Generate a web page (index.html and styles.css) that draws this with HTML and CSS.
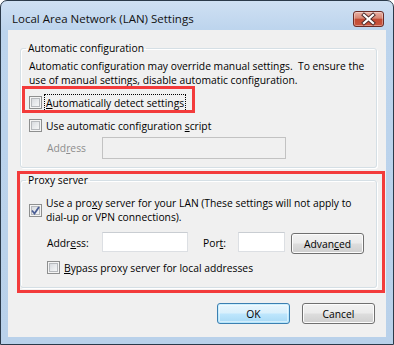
FILE: index.html
```html
<!DOCTYPE html>
<html>
<head>
<meta charset="utf-8">
<link rel="stylesheet" href="styles.css">
</head>
<body>
<div class="window">
  <div class="titlebar">
    <span class="title">Local Area Network (LAN) Settings</span>
    <span class="close">
      <svg width="29" height="14" viewBox="0 0 29 14">
        <path d="M10 3 L19 11 M19 3 L10 11" stroke="#4a2a2a" stroke-width="4" stroke-linecap="square" fill="none"/>
        <path d="M10 3 L19 11 M19 3 L10 11" stroke="#fff" stroke-width="2.2" stroke-linecap="square" fill="none"/>
      </svg>
    </span>
  </div>
  <div class="client">
    <fieldset class="group g1">
      <legend>Automatic configuration</legend>
      <p class="desc">Automatic configuration may override manual settings.&nbsp; To ensure the<br>use of manual settings, disable automatic configuration.</p>
      <div class="check row1"><span class="cb"></span><span class="lbl focus"><u>A</u>utomatically detect settings</span></div>
      <div class="check row2"><span class="cb"></span><span class="lbl">Use automatic configuration <u>s</u>cript</span></div>
      <div class="addr"><span class="alabel disabled">Add<u>r</u>ess</span><span class="input dis"></span></div>
    </fieldset>
    <fieldset class="group g2">
      <legend>Proxy server</legend>
      <div class="check multi"><span class="cb checked"><svg width="9" height="9" viewBox="0 0 9 9"><path d="M1 4.5 L3.5 7.5 L8 1" stroke="#4b5e95" stroke-width="1.8" fill="none"/></svg></span><span class="lbl">Use a pro<u>x</u>y server for your LAN (These settings will not apply to<br>dial-up or VPN connections).</span></div>
      <div class="proxyrow">
        <span class="plabel">Addr<u>e</u>ss:</span><span class="input paddr"></span>
        <span class="plabel port">Por<u>t</u>:</span><span class="input pport"></span>
        <span class="btn adv">Advan<u>c</u>ed</span>
      </div>
      <div class="check bypass"><span class="cb"></span><span class="lbl"><u>B</u>ypass proxy server for local addresses</span></div>
    </fieldset>
    <div class="buttons">
      <span class="btn default">OK</span>
      <span class="btn">Cancel</span>
    </div>
  </div>
  <div class="mark m1"></div>
  <div class="mark m2"></div>
</div>
</body>
</html>
```
FILE: styles.css
```css
* { box-sizing: border-box; }
html, body { margin: 0; padding: 0; background: #fff; }
body { font-family: "Open Sans", "Noto Sans", sans-serif; font-size: 10.3px; color: #000; white-space: nowrap; }

.window {
  position: relative;
  width: 394px;
  height: 345px;
  border: 1px solid #2b3a4a;
  border-radius: 7px 7px 0 0;
  background: linear-gradient(180deg, #cfe0f3 0, #bcd4ed 30px, #b9d1ea 100%);
  padding: 0 7px 7px 7px;
  display: flex;
  flex-direction: column;
}

.titlebar {
  height: 29px;
  display: flex;
  align-items: flex-start;
  justify-content: space-between;
  padding: 10px 2px 0 4px;
}
.title { line-height: 16px; font-size: 11.5px; color: #111; }
.close {
  width: 31px;
  height: 16px;
  border: 1px solid #6b2b25;
  border-radius: 3px;
  background: linear-gradient(180deg, #e9b1a5 0, #d78572 45%, #c34a33 50%, #c9553d 100%);
  box-shadow: inset 0 0 0 1px rgba(255,255,255,0.35);
  display: flex;
  align-items: center;
  justify-content: center;
}

.client {
  flex: 1;
  background: #f0f0f0;
  display: flex;
  flex-direction: column;
}

.group {
  margin: 0 9px 0 12px;
  border: 1px solid #d5dfe5;
  border-radius: 3px;
  box-shadow: inset 1px 1px 0 #fff, 1px 1px 0 #fff;
  min-width: 0;
  padding-left: 8px;
  padding-right: 8px;
}
.group legend {
  line-height: 14px;
  padding: 0 2px;
  margin-left: -3px;
}
.g1 { margin-top: 11px; padding-top: 4px; padding-bottom: 8px; }
.g2 { margin-top: 5px; padding-top: 9px; padding-bottom: 11px; }

.desc { margin: 0; line-height: 14px; }

.check { display: flex; align-items: center; line-height: 14px; }
.check .cb { margin-right: 3px; flex: none; }
.row1 { height: 17px; margin-top: 7px; }
.row2 { height: 17px; margin-top: 6px; }
.lbl { padding: 1px 1px; }
.focus { outline: 1px dotted #000; outline-offset: 0; }

.cb {
  width: 13px;
  height: 13px;
  border: 1px solid #8e8f8f;
  background: linear-gradient(135deg, #d0d3d8 0, #eceef0 60%, #fbfbfb 100%);
  box-shadow: inset 0 0 0 1px #f4f4f4, inset 0 0 0 2px #b6b9bd;
  display: flex;
  align-items: center;
  justify-content: center;
}

.addr { display: flex; align-items: center; margin-top: 3px; height: 22px; }
.alabel { margin-left: 18px; width: 55px; }
.disabled { color: #8d8d8d; }
.input {
  display: block;
  background: #fff;
  border: 1px solid #dcdfe3;
  border-top-color: #c9cdd2;
}
.input.dis { width: 184px; height: 22px; background: #f0f0f0; border: 1px solid #c2c2c2; }

.multi { margin-top: 0; align-items: center; }
.multi .lbl { padding: 0 0 0 1px; }

.proxyrow { display: flex; align-items: flex-start; margin-top: 8px; height: 22px; }
.plabel { line-height: 14px; margin-top: 4px; }
.proxyrow .plabel:first-child { margin-left: 18px; width: 55px; }
.paddr { width: 86px; height: 20px; }
.port { margin-left: 15px; width: 35px; }
.pport { width: 47px; height: 20px; }
.adv { margin-left: 6px; width: 73px; height: 21px; margin-top: 1px; }

.bypass { margin-top: 5px; height: 17px; margin-left: 18px; }

.btn {
  display: flex;
  align-items: center;
  justify-content: center;
  border: 1px solid #707070;
  border-radius: 3px;
  background: linear-gradient(180deg, #f2f2f2 0, #ebebeb 48%, #dddddd 52%, #cfcfcf 100%);
  box-shadow: inset 0 0 0 1px #fcfcfc;
  line-height: 14px;
  color: #000;
}

.buttons {
  display: flex;
  justify-content: flex-end;
  gap: 12px;
  margin-top: 15px;
  padding-right: 11px;
}
.buttons .btn { width: 73px; height: 21px; }
.btn.default {
  border-color: #3c7fb1;
  background: linear-gradient(180deg, #eaf6fd 0, #d9f0fc 48%, #bee6fd 52%, #a7d9f5 100%);
  box-shadow: inset 0 0 0 1px #48d1ff33, inset 0 0 0 2px #f5fbff88;
}

.mark {
  position: absolute;
  border: 3px solid #f33b3b;
}
.m1 { left: 21px; top: 85px; width: 173px; height: 27px; }
.m2 { left: 16px; top: 170px; width: 368px; height: 122px; }
```
